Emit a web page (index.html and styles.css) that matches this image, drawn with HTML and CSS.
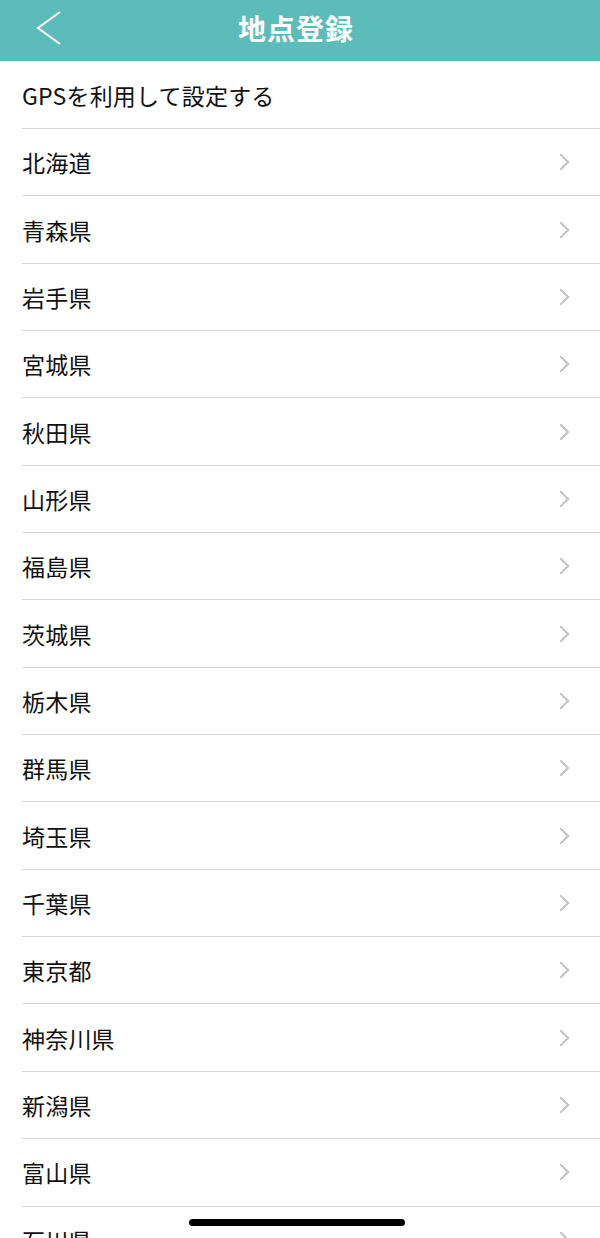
FILE: index.html
```html
<!DOCTYPE html>
<html lang="ja">
<head>
  <meta charset="UTF-8" />
  <meta name="viewport" content="width=device-width, initial-scale=1.0" />
  <title>地点登録</title>
  <link rel="stylesheet" href="styles.css">
</head>
<body>

  <header class="navbar">
    <a class="back" href="#">
      <svg width="26" height="34" viewBox="0 0 26 34">
        <polyline points="24,1 2,17 24,33" fill="none" stroke="#fff" stroke-width="2" />
      </svg>
    </a>
    <h1>地点登録</h1>
  </header>

  <ul class="list">
    <li class="row">GPSを利用して設定する</li>
    <li class="row pref">北海道<span class="chev"></span></li>
    <li class="row pref">青森県<span class="chev"></span></li>
    <li class="row pref">岩手県<span class="chev"></span></li>
    <li class="row pref">宮城県<span class="chev"></span></li>
    <li class="row pref">秋田県<span class="chev"></span></li>
    <li class="row pref">山形県<span class="chev"></span></li>
    <li class="row pref">福島県<span class="chev"></span></li>
    <li class="row pref">茨城県<span class="chev"></span></li>
    <li class="row pref">栃木県<span class="chev"></span></li>
    <li class="row pref">群馬県<span class="chev"></span></li>
    <li class="row pref">埼玉県<span class="chev"></span></li>
    <li class="row pref">千葉県<span class="chev"></span></li>
    <li class="row pref">東京都<span class="chev"></span></li>
    <li class="row pref">神奈川県<span class="chev"></span></li>
    <li class="row pref">新潟県<span class="chev"></span></li>
    <li class="row pref">富山県<span class="chev"></span></li>
    <li class="row pref">石川県<span class="chev"></span></li>
    <li class="row pref">福井県<span class="chev"></span></li>
  </ul>

  <div class="home-indicator"></div>

</body>
</html>
```

FILE: styles.css
```css
* {
  box-sizing: border-box;
}

html,
body {
  margin: 0;
  padding: 0;
}

body {
  width: 600px;
  height: 1238px;
  overflow: hidden;
  background: #fff;
  color: #111;
  font-family: "Noto Sans CJK JP", "Noto Sans", sans-serif;
}

.navbar {
  position: relative;
  height: 61px;
  background: #5bbcb9;
  display: flex;
  align-items: center;
  justify-content: center;
}

.navbar h1 {
  margin: 0;
  color: #fff;
  font-size: 28px;
  font-weight: 700;
  letter-spacing: 1px;
  line-height: 1;
  transform: translate(-4px, -3px);
}

.back {
  position: absolute;
  left: 36px;
  top: 11px;
  display: block;
  line-height: 0;
}

.list {
  list-style: none;
  margin: 0;
  padding: 0;
}

.row {
  height: 67.35px;
  margin-left: 22px;
  padding-right: 30px;
  border-bottom: 1px solid #d6d6d6;
  display: flex;
  align-items: center;
  justify-content: space-between;
  font-size: 23px;
  letter-spacing: 0.2px;
}

.row:first-child {
  height: 68px;
}

.chev {
  width: 12px;
  height: 12px;
  border-top: 2px solid #c4c4c4;
  border-right: 2px solid #c4c4c4;
  transform: rotate(45deg);
  margin-right: 3px;
}

.home-indicator {
  position: fixed;
  left: 189px;
  bottom: 12px;
  width: 216px;
  height: 7px;
  border-radius: 4px;
  background: #000;
}
```
